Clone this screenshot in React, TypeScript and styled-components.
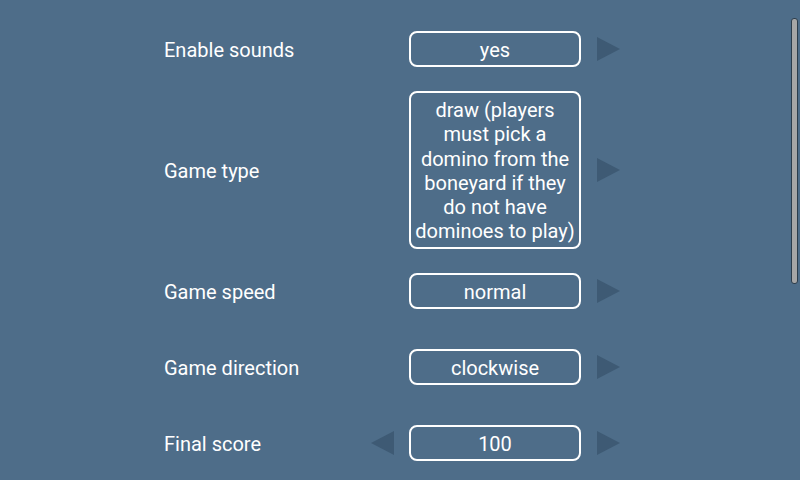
import React from 'react';
import styled, { createGlobalStyle } from 'styled-components';

const GlobalStyle = createGlobalStyle`
  html, body {
    margin: 0;
    padding: 0;
    overflow: hidden;
  }

  body {
    background-color: #4e6d89;
    font-family: Roboto, 'Liberation Sans', sans-serif;
  }
`;

type Option = {
  label: string;
  value: string;
  hasPrev?: boolean;
  hasNext?: boolean;
};

const options: Option[] = [
  { label: 'Enable sounds', value: 'yes', hasNext: true },
  {
    label: 'Game type',
    value:
      'draw (players must pick a domino from the boneyard if they do not have dominoes to play)',
    hasNext: true,
  },
  { label: 'Game speed', value: 'normal', hasNext: true },
  { label: 'Game direction', value: 'clockwise', hasNext: true },
  { label: 'Final score', value: '100', hasPrev: true, hasNext: true },
];

const App = () => {
  return (
    <React.Fragment>
      <GlobalStyle />
      <Screen>
        <SettingsList>
          {options.map((opt) => (
            <SettingRow key={opt.label}>
              <Label>{opt.label}</Label>

              <ArrowSlot>
                {opt.hasPrev && <Arrow direction="left" />}
              </ArrowSlot>

              <ValueBox>{opt.value}</ValueBox>

              <ArrowSlot>
                {opt.hasNext && <Arrow direction="right" />}
              </ArrowSlot>
            </SettingRow>
          ))}
        </SettingsList>

        <ScrollThumb />
      </Screen>
    </React.Fragment>
  );
};

const Screen = styled.div`
  position: relative;
  width: 800px;
  height: 480px;
  overflow: hidden;
  background-color: #4e6d89;
`;

const SettingsList = styled.div`
  display: flex;
  flex-direction: column;
  padding: 11px 0 0 164px;
`;

const SettingRow = styled.div`
  display: grid;
  grid-template-columns: 192px 23px 172px 23px;
  column-gap: 15px;
  align-items: center;

  box-sizing: border-box;
  min-height: 76px;
  padding: 4px 0;
`;

const Label = styled.div`
  padding-top: 2px;
  font-size: 20px;
  color: #ffffff;
  white-space: nowrap;
`;

const ArrowSlot = styled.div`
  display: flex;
  align-items: center;
  justify-content: center;
  height: 24px;
`;

// ** 좌우 화살표 **
const Arrow = styled.div<{ direction: 'left' | 'right' }>`
  width: 0;
  height: 0;
  border-top: 12px solid transparent;
  border-bottom: 12px solid transparent;
  ${({ direction }) =>
    direction === 'right'
      ? 'border-left: 23px solid #3e5a74; margin-left: 2px;'
      : 'border-right: 23px solid #3e5a74;'}
`;

const ValueBox = styled.div`
  box-sizing: border-box;
  width: 172px;
  min-height: 36px;
  padding: 5px 0 3px;

  border: 2px solid #ffffff;
  border-radius: 8px;

  font-size: 20px;
  line-height: 24.3px;
  text-align: center;
  color: #ffffff;
`;

// ** 스크롤바 **
const ScrollThumb = styled.div`
  position: absolute;
  top: 18px;
  right: 2px;
  width: 5px;
  height: 264px;

  background-color: #a6a6a6;
  border: 1px solid #2c3d4c;
  border-radius: 3px;
`;

export default App;
